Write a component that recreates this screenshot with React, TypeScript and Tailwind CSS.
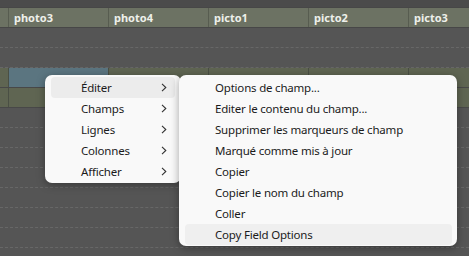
import React from "react";

const cols = ["photo3", "photo4", "picto1", "picto2", "picto3"];

type RowKind = "dark" | "olive";
const rows: RowKind[] = ["dark", "dark", "olive", "olive", "dark", "dark", "dark", "dark", "dark", "dark", "dark", "dark"];

const leftItems = ["Éditer", "Champs", "Lignes", "Colonnes", "Afficher"];
const rightItems = [
  "Options de champ...",
  "Editer le contenu du champ...",
  "Supprimer les marqueurs de champ",
  "Marqué comme mis à jour",
  "Copier",
  "Copier le nom du champ",
  "Coller",
  "Copy Field Options",
];

const Chevron = () => (
  <svg width="6" height="9" viewBox="0 0 6 9" fill="none" className="shrink-0">
    <path d="M1 0.8 L4.8 4.5 L1 8.2" stroke="#333" strokeWidth="1.1" />
  </svg>
);

const Grid = () => (
  <div className="flex flex-col">
    <div className="h-[7px] bg-[#4b4b4b]" />
    <div className="flex h-[21px] border-y border-[#474747] bg-[#6c7263] text-[11px] font-bold text-[#eef0ea]">
      <div className="w-[8px] shrink-0" />
      {cols.map((c) => (
        <div key={c} className="w-[100px] shrink-0 border-l border-[#575c50] pl-[5px] leading-[19px]">
          {c}
        </div>
      ))}
    </div>
    {rows.map((r, i) => (
      <div
        key={i}
        className={
          r === "olive"
            ? "flex h-[20px] border-b border-[#484848] bg-[#5f6552]"
            : "flex h-[20px] border-b border-dashed border-[#676767] bg-[#555555]"
        }
      >
        <div className="w-[8px] shrink-0" />
        {cols.map((c, j) => (
          <div
            key={c}
            className={
              r === "olive"
                ? i === 2 && j === 0
                  ? "w-[100px] shrink-0 border-l border-[#4a4f44] bg-[#5b7580]"
                  : "w-[100px] shrink-0 border-l border-[#4a4f44]"
                : "w-[100px] shrink-0"
            }
          />
        ))}
      </div>
    ))}
  </div>
);

export default function App() {
  return (
    <div
      className="relative h-[256px] w-[469px] overflow-hidden bg-[#555555]"
      style={{ fontFamily: '"Noto Sans", "Open Sans", sans-serif' }}
    >
      <Grid />

      <div className="absolute left-[45px] top-[75px] w-[136px] rounded-[7px] bg-[#f9f9f9] px-[6px] pb-[1px] pt-[2px] shadow-[0_2px_8px_rgba(0,0,0,0.35)]">
        {leftItems.map((t, i) => (
          <div
            key={t}
            className={
              i === 0
                ? "flex h-[21px] items-center justify-between rounded-[4px] bg-[#ececec] pl-[30px] pr-[8px] text-[11.5px] tracking-[-0.2px] text-[#1b1b1b]"
                : "flex h-[21px] items-center justify-between pl-[30px] pr-[8px] text-[11.5px] tracking-[-0.2px] text-[#1b1b1b]"
            }
          >
            <span>{t}</span>
            <Chevron />
          </div>
        ))}
      </div>

      <div className="absolute left-[179px] top-[75px] w-[278px] rounded-[7px] bg-[#f9f9f9] pb-[1px] pl-[6px] pr-[5px] pt-[2px] shadow-[0_2px_8px_rgba(0,0,0,0.35)]">
        {rightItems.map((t, i) => (
          <div
            key={t}
            className={
              i === rightItems.length - 1
                ? "flex h-[21px] items-center rounded-[4px] bg-[#efefef] pl-[30px] text-[11.5px] tracking-[-0.2px] text-[#1b1b1b]"
                : "flex h-[21px] items-center pl-[30px] text-[11.5px] tracking-[-0.2px] text-[#1b1b1b]"
            }
          >
            {t}
          </div>
        ))}
      </div>
    </div>
  );
}
